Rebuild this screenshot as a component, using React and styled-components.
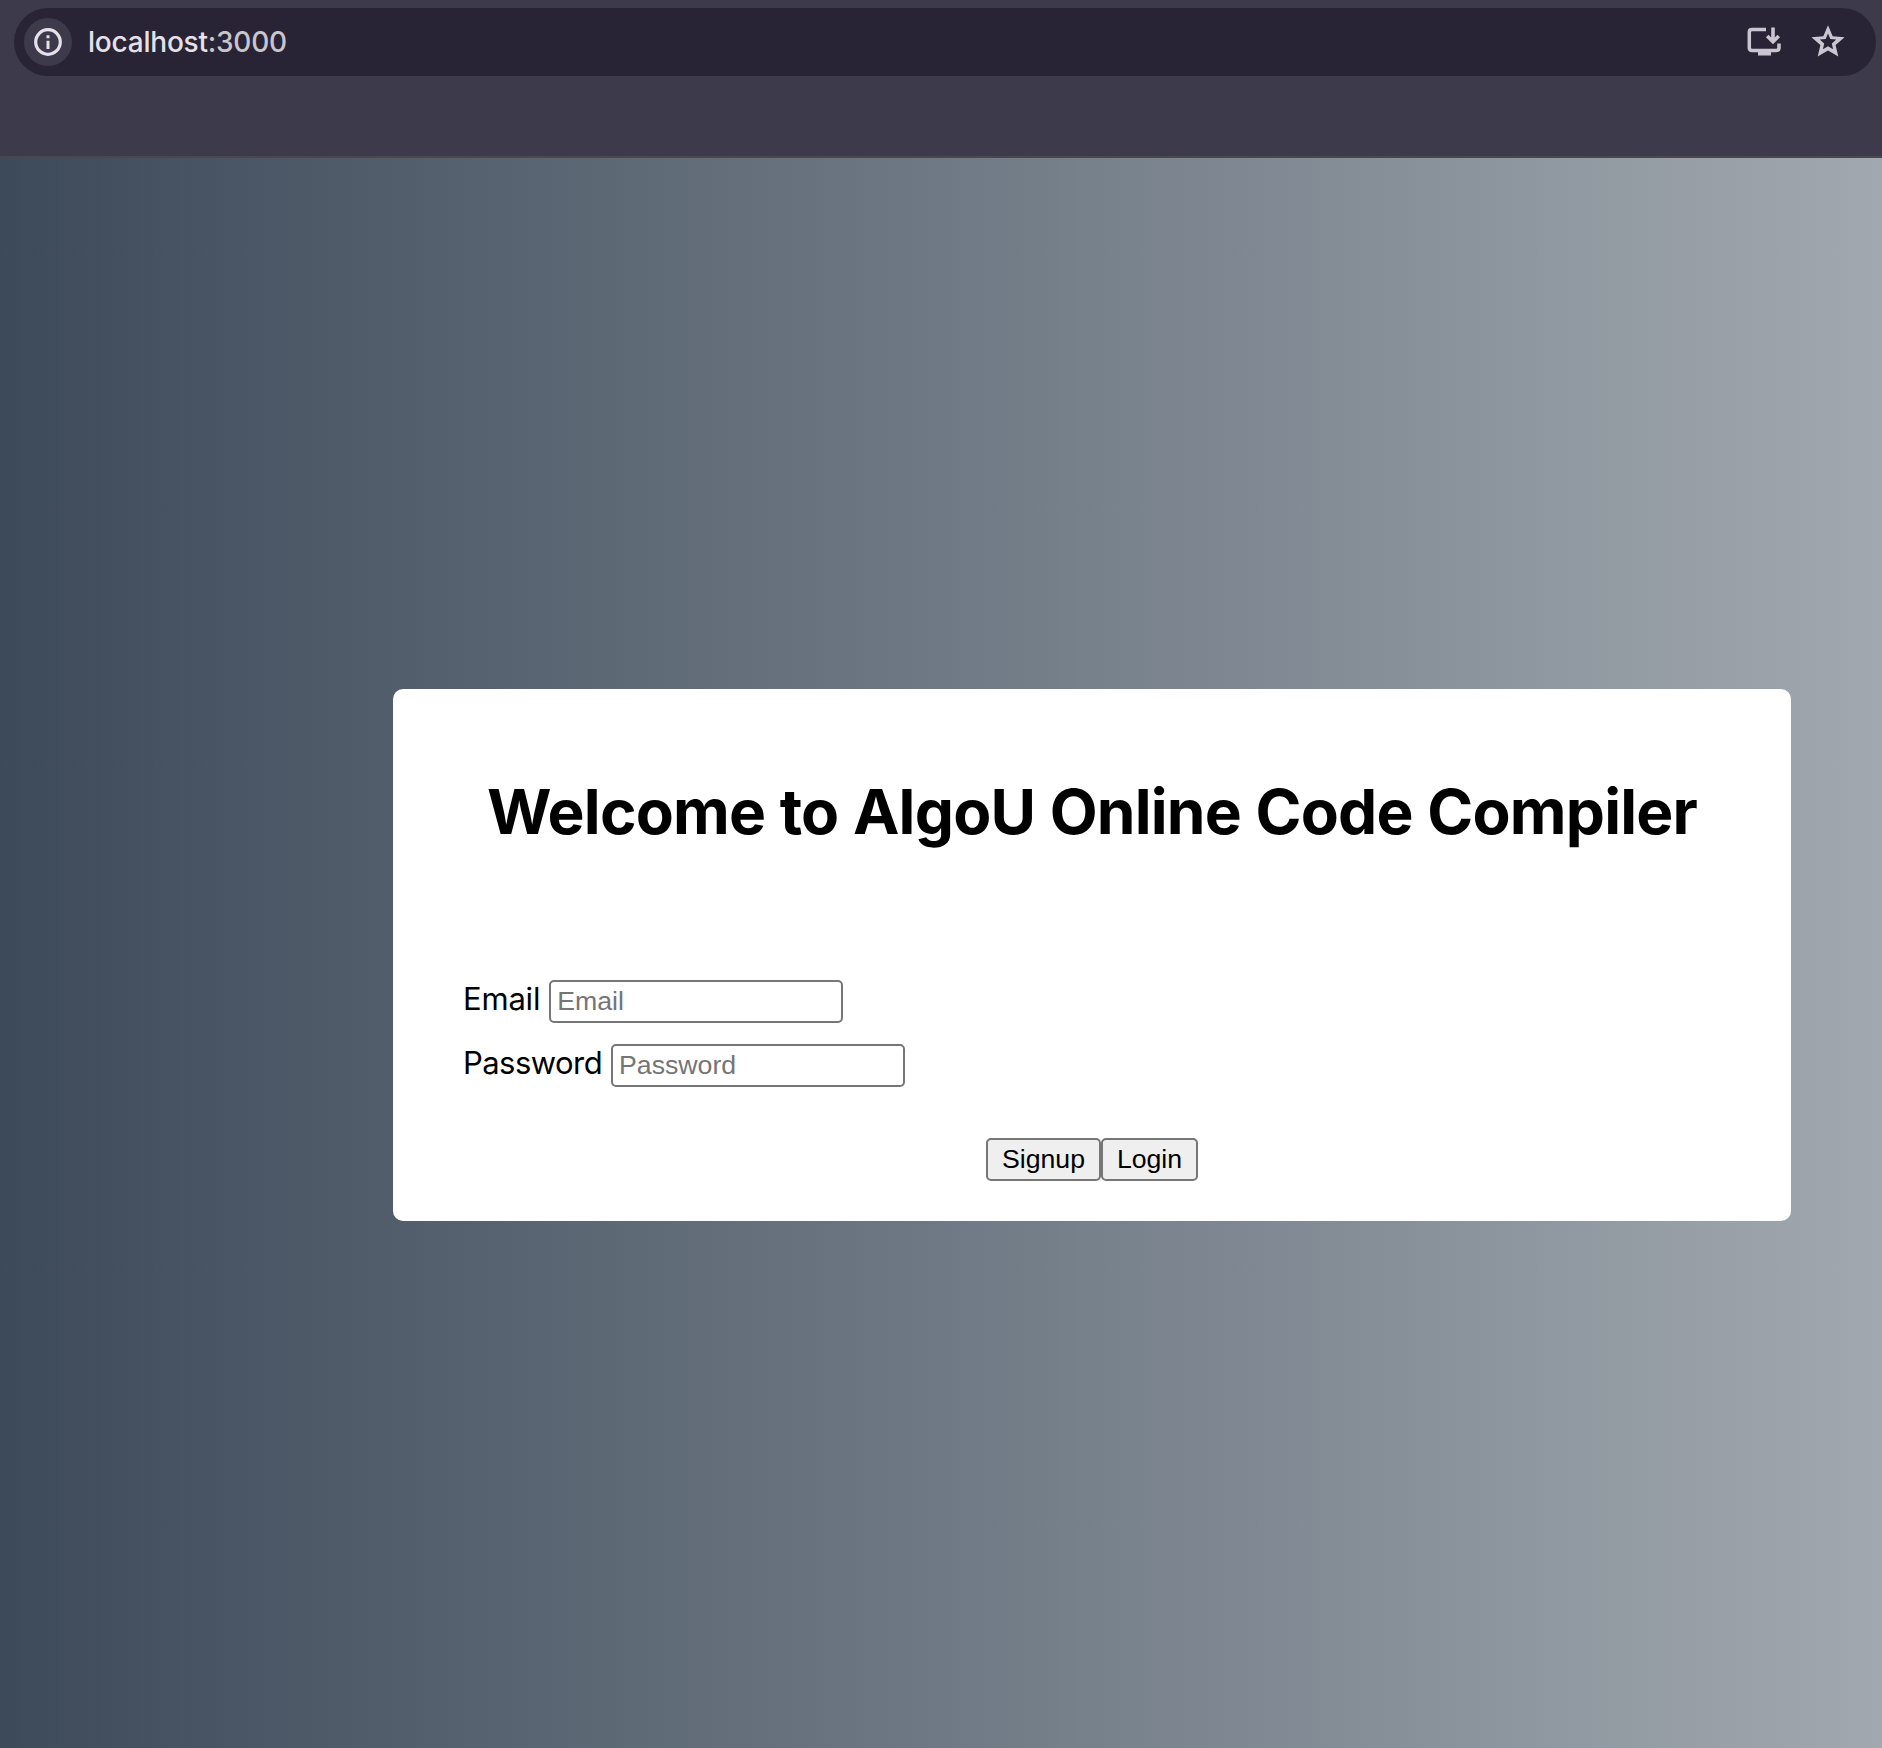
import React from "react";
import styled, { createGlobalStyle } from "styled-components";

const GlobalStyle = createGlobalStyle`
  * { box-sizing: border-box; }
  body { margin: 0; background: #3c3a4b; font-family: Inter, "Liberation Sans", sans-serif; }
`;

const Window = styled.div`
  display: flex;
  flex-direction: column;
  width: 1882px;
  height: 1748px;
  overflow: hidden;
`;

const Toolbar = styled.header`
  height: 158px;
  padding: 8px 6px 0 14px;
  background: #3c3a4b;
  border-bottom: 2px solid #4a484e;
`;

const AddressBar = styled.div`
  display: flex;
  align-items: center;
  height: 68px;
  padding: 0 28px 0 10px;
  border-radius: 34px;
  background: #282435;
`;

const SiteInfo = styled.span`
  display: flex;
  align-items: center;
  justify-content: center;
  width: 48px;
  height: 48px;
  border-radius: 50%;
  background: #3c3a4b;
`;

const Address = styled.div`
  flex: 1;
  padding-left: 16px;
  font-size: 28px;
  line-height: 34px;
  font-weight: 450;
  letter-spacing: -0.22px;
  color: #e6e1e9;
`;

const Port = styled.span`
  color: #c9c5cd;
`;

const Actions = styled.div`
  display: flex;
  align-items: center;
  gap: 26px;
  color: #cac5d0;
`;

const Icon = styled.svg`
  display: block;
  width: ${(p) => p.$size}px;
  height: ${(p) => p.$size}px;
`;

const Page = styled.main`
  flex: 1;
  display: flex;
  justify-content: flex-end;
  align-items: flex-start;
  padding: 531px 91px 0 0;
  background: linear-gradient(to right, #3d4a5a, #a1a8af);
`;

const Card = styled.section`
  display: flex;
  flex-direction: column;
  width: 1398px;
  height: 532px;
  padding: 84px 70px 39px;
  border-radius: 10px;
  background: #fff;
`;

const Title = styled.h1`
  margin: 0 0 129px;
  text-align: center;
  white-space: nowrap;
  font-size: 62.2px;
  line-height: 78px;
  font-weight: 700;
  letter-spacing: -0.8px;
  word-spacing: 0.6px;
  color: #000;
`;

const Fields = styled.div`
  display: flex;
  flex-direction: column;
  gap: 21px;
`;

const Field = styled.label`
  display: flex;
  height: 43px;
  gap: ${(p) => p.$gap}px;
  font-size: 31px;
  line-height: 38px;
  letter-spacing: ${(p) => p.$tracking}px;
  color: #000;
`;

const Input = styled.input`
  width: 294px;
  height: 43px;
  padding: 0 6px;
  border: 2px solid #767676;
  border-radius: 5px;
  outline: none;
  background: #fff;
  font: 26.67px "Liberation Sans", Arial, sans-serif;
  &::placeholder { color: #757575; opacity: 1; }
`;

const Buttons = styled.div`
  display: flex;
  justify-content: center;
  margin-top: 51px;
`;

const Button = styled.button`
  width: ${(p) => p.$width}px;
  height: 43px;
  padding: 0;
  border: 2px solid #767676;
  border-radius: 5px;
  background: #efefef;
  color: #000;
  font: 26.67px/39px "Liberation Sans", Arial, sans-serif;
`;

export default function App() {
  return (
    <Window>
      <GlobalStyle />
      <Toolbar>
        <AddressBar>
          <SiteInfo>
            <Icon $size={28} viewBox="0 0 28 28" fill="none">
              <circle cx="14" cy="14" r="12.3" stroke="#e6e1e9" strokeWidth="3.2" />
              <path d="M12.5 12.7h3v8.3h-3zM12.5 7.3h3v3h-3z" fill="#e6e1e9" />
            </Icon>
          </SiteInfo>
          <Address>
            localhost<Port>:3000</Port>
          </Address>
          <Actions>
            <Icon $size={36} viewBox="0 0 36 36" fill="none">
              <path
                d="M20 5.6H6Q3.3 5.6 3.3 8.3V23.7Q3.3 26.4 6 26.4H30.3Q33 26.4 33 23.7V19.5"
                stroke="currentColor"
                strokeWidth="3.5"
              />
              <path d="M12 26.5h13v5H12z" fill="currentColor" />
              <path d="M27 3.6v14M21.2 12l5.8 5.8 5.8-5.8" stroke="currentColor" strokeWidth="3.6" />
            </Icon>
            <Icon $size={40} viewBox="0 0 40 40" fill="none">
              <path
                fill="currentColor"
                fillRule="evenodd"
                d="M20 3.2 24.7 14.2 36.6 15.2 27.6 23 30.3 34.6 20 28.5 9.7 34.6 12.4 23 3.4 15.2 15.3 14.2ZM20 11.5 17.7 17 11.7 17.5 16.2 21.4 14.9 27.3 20 24.2 25.1 27.3 23.8 21.4 28.3 17.5 22.3 17Z"
              />
            </Icon>
          </Actions>
        </AddressBar>
      </Toolbar>
      <Page>
        <Card>
          <Title>Welcome to AlgoU Online Code Compiler</Title>
          <Fields>
            <Field $gap={9} $tracking={-0.2}>
              Email
              <Input type="email" placeholder="Email" />
            </Field>
            <Field $gap={9} $tracking={-0.55}>
              Password
              <Input type="password" placeholder="Password" />
            </Field>
          </Fields>
          <Buttons>
            <Button $width={115}>Signup</Button>
            <Button $width={97}>Login</Button>
          </Buttons>
        </Card>
      </Page>
    </Window>
  );
}
